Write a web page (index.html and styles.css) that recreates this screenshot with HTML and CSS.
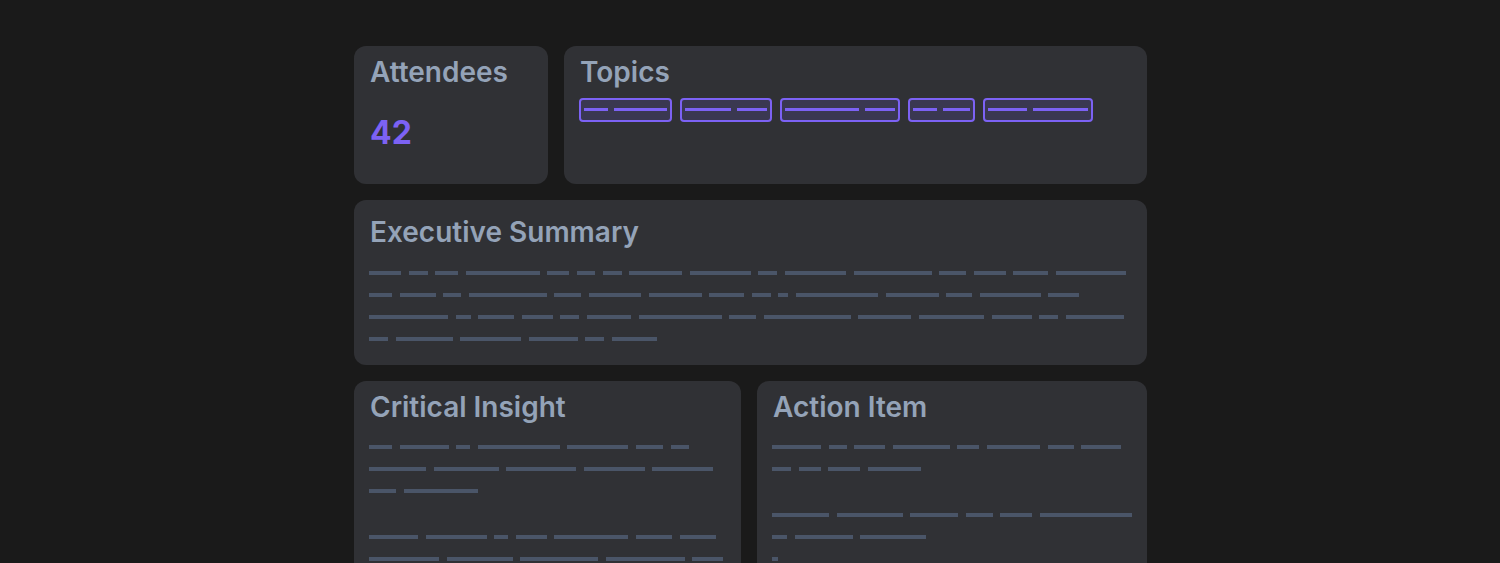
FILE: index.html
```html
<!DOCTYPE html>
<html lang="en">
<head>
  <meta charset="UTF-8" />
  <meta name="viewport" content="width=device-width, initial-scale=1.0" />
  <title>Meeting Report</title>
  <link rel="stylesheet" href="styles.css">
</head>
<body>
  <main class="report">
    <section class="row row-top">
      <div class="card stat">
        <h2 class="card-title">Attendees</h2>
        <div class="stat-value">42</div>
      </div>
      <div class="card">
        <h2 class="card-title">Topics</h2>
        <div class="tags">
          <span class="tag"><i style="width:24px"></i><i style="width:53px"></i></span>
          <span class="tag"><i style="width:46px"></i><i style="width:30px"></i></span>
          <span class="tag"><i style="width:74px"></i><i style="width:30px"></i></span>
          <span class="tag"><i style="width:24px"></i><i style="width:27px"></i></span>
          <span class="tag"><i style="width:39px"></i><i style="width:55px"></i></span>
        </div>
      </div>
    </section>

    <section class="card summary">
      <h2 class="card-title">Executive Summary</h2>
      <div class="text">
        <p>
          <span class="line"><i style="width:32px"></i><i style="width:19px"></i><i style="width:23px"></i><i style="width:74px"></i><i style="width:22px"></i><i style="width:18px"></i><i style="width:19px"></i><i style="width:53px"></i><i style="width:61px"></i><i style="width:19px"></i><i style="width:61px"></i><i style="width:78px"></i><i style="width:27px"></i><i style="width:32px"></i><i style="width:35px"></i><i style="width:70px"></i></span>
          <span class="line"><i style="width:23px"></i><i style="width:36px"></i><i style="width:18px"></i><i style="width:78px"></i><i style="width:27px"></i><i style="width:52px"></i><i style="width:53px"></i><i style="width:35px"></i><i style="width:19px"></i><i style="width:10px"></i><i style="width:82px"></i><i style="width:53px"></i><i style="width:26px"></i><i style="width:61px"></i><i style="width:31px"></i></span>
          <span class="line"><i style="width:79px"></i><i style="width:15px"></i><i style="width:36px"></i><i style="width:31px"></i><i style="width:19px"></i><i style="width:44px"></i><i style="width:83px"></i><i style="width:27px"></i><i style="width:87px"></i><i style="width:53px"></i><i style="width:65px"></i><i style="width:40px"></i><i style="width:19px"></i><i style="width:58px"></i></span>
          <span class="line"><i style="width:19px"></i><i style="width:57px"></i><i style="width:61px"></i><i style="width:49px"></i><i style="width:19px"></i><i style="width:45px"></i></span>
        </p>
      </div>
    </section>

    <section class="row row-split">
      <div class="card">
        <h2 class="card-title">Critical Insight</h2>
        <div class="text">
          <p>
            <span class="line"><i style="width:23px"></i><i style="width:49px"></i><i style="width:14px"></i><i style="width:82px"></i><i style="width:61px"></i><i style="width:27px"></i><i style="width:18px"></i></span>
            <span class="line"><i style="width:57px"></i><i style="width:65px"></i><i style="width:70px"></i><i style="width:61px"></i><i style="width:61px"></i></span>
            <span class="line"><i style="width:27px"></i><i style="width:74px"></i></span>
          </p>
          <p>
            <span class="line"><i style="width:49px"></i><i style="width:61px"></i><i style="width:14px"></i><i style="width:31px"></i><i style="width:74px"></i><i style="width:36px"></i><i style="width:36px"></i></span>
            <span class="line"><i style="width:70px"></i><i style="width:66px"></i><i style="width:78px"></i><i style="width:79px"></i><i style="width:31px"></i></span>
            <span class="line"><i style="width:44px"></i><i style="width:23px"></i><i style="width:61px"></i></span>
          </p>
        </div>
      </div>
      <div class="card">
        <h2 class="card-title">Action Item</h2>
        <div class="text">
          <p>
            <span class="line"><i style="width:49px"></i><i style="width:18px"></i><i style="width:31px"></i><i style="width:57px"></i><i style="width:22px"></i><i style="width:53px"></i><i style="width:26px"></i><i style="width:40px"></i></span>
            <span class="line"><i style="width:19px"></i><i style="width:22px"></i><i style="width:32px"></i><i style="width:53px"></i></span>
          </p>
          <p>
            <span class="line"><i style="width:57px"></i><i style="width:66px"></i><i style="width:48px"></i><i style="width:27px"></i><i style="width:32px"></i><i style="width:92px"></i></span>
            <span class="line"><i style="width:15px"></i><i style="width:58px"></i><i style="width:66px"></i></span>
            <span class="line"><i style="width:6px"></i></span>
          </p>
        </div>
      </div>
    </section>
  </main>
</body>
</html>
```

FILE: styles.css
```css
* {
  box-sizing: border-box;
}

body {
  margin: 0;
  background-color: #1a1a1a;
  color: #94a3b8;
  font-family: Inter, "Noto Sans", sans-serif;
}

.report {
  width: 794px;
  margin: 46px auto 0;
  padding-left: 1px;
  display: flex;
  flex-direction: column;
  gap: 16px;
}

.row {
  display: grid;
  gap: 16px;
}

.row-top {
  grid-template-columns: 194px 1fr;
}

.row-split {
  grid-template-columns: 1fr 1fr;
}

.card {
  background-color: #303135;
  border-radius: 12px;
  padding: 10px 15px 15px;
}

.card-title {
  margin: 0;
  padding-left: 1px;
  font-size: 28px;
  line-height: 1.2;
  font-weight: 600;
  color: #94a3b8;
}

/* attendees count */
.stat {
  min-height: 138px;
}

.stat-value {
  margin-top: 24px;
  padding-left: 1px;
  font-size: 32px;
  line-height: 1.2;
  font-weight: 700;
  color: #7c62f4;
}

/* topic chips */
.tags {
  display: flex;
  flex-wrap: wrap;
  gap: 8px;
  margin-top: 8px;
}

.tag {
  display: flex;
  align-items: center;
  gap: 6px;
  height: 24px;
  padding: 0 3px;
  border: 2px solid #7c62f4;
  border-radius: 4px;
  background-color: rgba(124, 98, 244, 0.15);
}

.tag i {
  display: block;
  height: 3px;
  background-color: #7c62f4;
}

/* placeholder text lines */
.summary {
  padding-top: 16px;
}

.text {
  margin-top: 12px;
}

.text p {
  margin: 0;
}

.text p + p {
  margin-top: 24px;
}

.line {
  display: flex;
  align-items: center;
  gap: 7.6px;
  height: 22px;
}

.line i {
  display: block;
  height: 4px;
  background-color: #4a5568;
}
```
